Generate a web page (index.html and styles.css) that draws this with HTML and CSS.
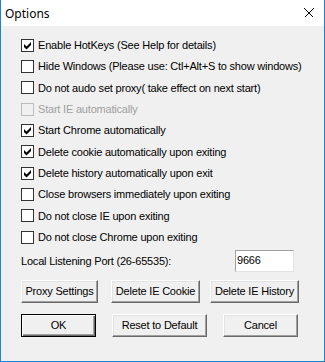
FILE: index.html
```html
<!DOCTYPE html>
<html lang="en">
<head>
  <meta charset="UTF-8">
  <title>Options</title>
  <link rel="stylesheet" href="styles.css">
</head>
<body>

<div class="window">
  <!-- title bar -->
  <div class="titlebar">
    <span class="title">Options</span>
    <svg class="close" width="10" height="10" viewBox="0 0 10 10">
      <path d="M0.5 0.5 L9.5 9.5 M9.5 0.5 L0.5 9.5" stroke="#000" stroke-width="1" fill="none"/>
    </svg>
  </div>

  <div class="content">
    <div class="checks">
      <div class="row"><span class="box on"><svg width="11" height="11" viewBox="0 0 11 11"><polygon points="2,4 4.5,6.5 9,2 9,5 4.5,9.5 2,7" fill="#000"/></svg></span><span class="label">Enable HotKeys (See Help for details)</span></div>
      <div class="row"><span class="box"></span><span class="label">Hide Windows (Please use: Ctl+Alt+S to show windows)</span></div>
      <div class="row"><span class="box"></span><span class="label">Do not audo set proxy( take effect on next start)</span></div>
      <div class="row disabled"><span class="box"></span><span class="label">Start IE automatically</span></div>
      <div class="row"><span class="box on"><svg width="11" height="11" viewBox="0 0 11 11"><polygon points="2,4 4.5,6.5 9,2 9,5 4.5,9.5 2,7" fill="#000"/></svg></span><span class="label">Start Chrome automatically</span></div>
      <div class="row"><span class="box on"><svg width="11" height="11" viewBox="0 0 11 11"><polygon points="2,4 4.5,6.5 9,2 9,5 4.5,9.5 2,7" fill="#000"/></svg></span><span class="label">Delete cookie automatically upon exiting</span></div>
      <div class="row"><span class="box on"><svg width="11" height="11" viewBox="0 0 11 11"><polygon points="2,4 4.5,6.5 9,2 9,5 4.5,9.5 2,7" fill="#000"/></svg></span><span class="label">Delete history automatically upon exit</span></div>
      <div class="row"><span class="box"></span><span class="label">Close browsers immediately upon exiting</span></div>
      <div class="row"><span class="box"></span><span class="label">Do not close IE upon exiting</span></div>
      <div class="row"><span class="box"></span><span class="label">Do not close Chrome upon exiting</span></div>
    </div>

    <div class="port">
      <span class="label">Local Listening Port (26-65535):</span>
      <div class="field">9666</div>
    </div>

    <div class="buttons first">
      <div class="btn w-proxy">Proxy Settings</div>
      <div class="btn w-cookie">Delete IE Cookie</div>
      <div class="btn w-history">Delete IE History</div>
    </div>

    <div class="buttons second">
      <div class="btn default w-ok">OK</div>
      <div class="btn w-reset">Reset to Default</div>
      <div class="btn w-cancel">Cancel</div>
    </div>
  </div>
</div>

</body>
</html>
```

FILE: styles.css
```css
* {
  box-sizing: border-box;
}
body {
  margin: 0;
  padding: 0;
  background: #f0f0f0;
  font-family: "Liberation Sans", Arial, sans-serif;
  font-size: 11px;
  letter-spacing: -0.2px;
  color: #000;
}

.window {
  width: 325px;
  height: 362px;
  background: #f0f0f0;
  border: 1px solid #1883d7;
  border-top: none;
  display: flex;
  flex-direction: column;
}

/* title bar */
.titlebar {
  height: 26px;
  background: #fff;
  display: flex;
  align-items: center;
  justify-content: space-between;
  padding: 0 10px 0 4px;
}
.title {
  font-family: "Noto Sans", "Open Sans", sans-serif;
  font-size: 12px;
  letter-spacing: 0;
}
.close {
  display: block;
  shape-rendering: crispEdges;
}

.content {
  padding: 8.5px 0 0 20px;
}

/* checkbox rows */
.row {
  height: 21.33px;
  display: flex;
  align-items: center;
}
.box {
  width: 13px;
  height: 13px;
  border: 1px solid #333;
  background: #fff;
  margin-right: 4px;
  flex: none;
  display: flex;
}
.box svg {
  display: block;
}
.row.disabled .box {
  border-color: #bcbcbc;
  background: #f0f0f0;
}
.row.disabled .label {
  color: #a0a0a0;
}

/* port */
.port {
  margin-top: 2px;
  height: 22px;
  display: flex;
  align-items: center;
}
.port .label {
  width: 214px;
}
.field {
  width: 59px;
  height: 22px;
  background: #fff;
  border: 1px solid;
  border-color: #a0a0a0 #e3e3e3 #e3e3e3 #a0a0a0;
  padding: 2px 0 0 1px;
  line-height: 14px;
}

/* buttons */
.buttons {
  display: flex;
}
.buttons.first {
  margin-top: 8px;
}
.buttons.second {
  margin-top: 11px;
}
.btn {
  height: 23px;
  display: flex;
  align-items: center;
  justify-content: center;
  background: #f0f0f0;
  border: 1px solid;
  border-color: #fff #696969 #696969 #fff;
  box-shadow: inset -1px -1px 0 #a0a0a0, inset 1px 1px 0 #e3e3e3;
}
.btn.default {
  border: 1px solid #000;
  box-shadow: inset 1px 1px 0 #fff, inset -1px -1px 0 #696969, inset -2px -2px 0 #a0a0a0;
}
.w-proxy { width: 77px; }
.w-cookie { width: 89px; margin-left: 13px; }
.w-history { width: 89px; margin-left: 10px; }
.w-ok { width: 75px; }
.w-reset { width: 95px; margin-left: 16px; }
.w-cancel { width: 75px; margin-left: 16px; }
```
